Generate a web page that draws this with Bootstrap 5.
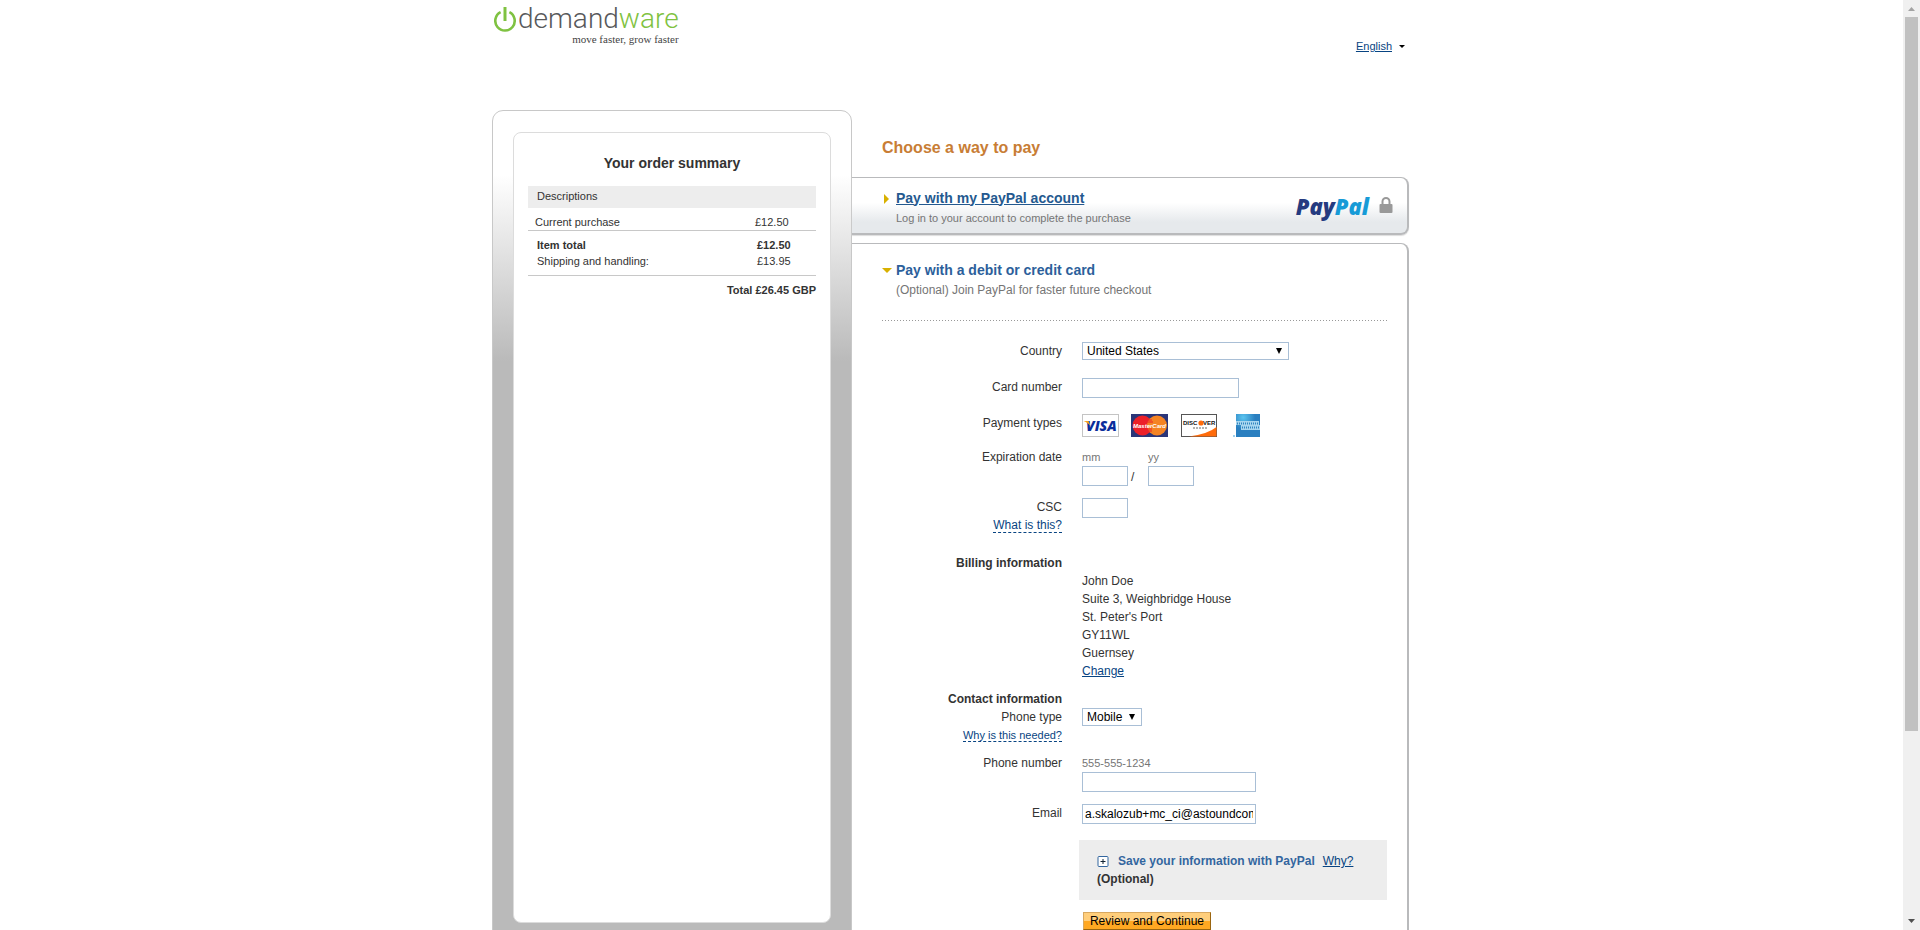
<!DOCTYPE html>
<html lang="en">
<head>
<meta charset="utf-8">
<meta name="viewport" content="width=device-width, initial-scale=1">
<title>Choose a way to pay</title>
<link href="https://cdn.jsdelivr.net/npm/bootstrap@5.3.0/dist/css/bootstrap.min.css" rel="stylesheet">
<script src="https://cdn.jsdelivr.net/npm/bootstrap@5.3.0/dist/js/bootstrap.bundle.min.js" defer></script>
<style>
  body { font: 12px/18px "Liberation Sans", Arial, sans-serif; color: #333; background: #fff; }
  a { color: #084482; }
  .checkout { max-width: 919px; padding-right: 2px; }
  .fine { font-size: 11px; }
  .hint { color: #757575; }

  /* header */
  .masthead { height: 110px; }
  .brand { padding: 5px 0 0 2px; }
  .brand-name { font: 300 28px/28px Roboto, sans-serif; color: #58595b; }
  .brand-name b { font-weight: 300; color: #7fc241; }
  .brand-tag { font: 11px/12px "Liberation Serif", serif; color: #444; }
  .lang { padding: 37px 4px 0 0; gap: 7px; }
  .lang-caret { border: 3px solid transparent; border-top-color: #000; border-bottom: 0; }

  /* order summary */
  .summary-frame { flex: 0 0 360px; padding: 21px 20px; border: 1px solid #c8c8c8; border-radius: 11px 11px 0 0; background: linear-gradient(#fff 64px, #bababa 250px); }
  .summary { border: 1px solid #dcdcdc; border-radius: 8px; padding: 20px 14px 0; background: #fff; }
  .summary h2 { font-size: 14px; line-height: 20px; margin: 0 0 13px; font-weight: 700; }
  .summary table { width: 100%; line-height: 16px; }
  .summary th, .summary td { padding: 0 0 0 9px; font-weight: inherit; }
  .summary td { width: 59px; padding: 0; }
  .summary .heading-row th { background: #ededed; line-height: 20px; padding-bottom: 2px; }
  .summary .lined { border-bottom: 1px solid #c8c8c8; }
  .summary .purchase th { padding: 6px 0 0 7px; }
  .summary .purchase td { padding-top: 6px; }
  .summary .purchase span { margin-left: -2px; }
  .summary .item-total > * { padding-top: 6px; }
  .summary .shipping > * { padding-bottom: 6px; }
  .summary .grand td { padding-top: 6px; }

  /* payment methods */
  .methods-title { font-size: 16px; line-height: 20px; color: #c87d35; font-weight: 700; margin: 28px 0 19px 30px; }
  .method { border: solid #b9babc; border-width: 1px 2px 2px 0; padding-left: 30px; }
  .method h2 { font-size: 14px; line-height: 18px; margin: 0 0 2px; font-weight: 700; color: #2c5f9b; }
  .method h2 a { color: #24598f; }
  .method-paypal { height: 58px; border-radius: 0 8px 8px 0; box-shadow: 0 1px 1px #ddd; background: linear-gradient(#fff 45%, #e6e9ec 80%); margin-bottom: 8px; padding-right: 14px; }
  .method-card { border-bottom: 0; border-radius: 0 8px 0 0; padding: 17px 20px 15px 30px; }
  .marker { flex: 0 0 14px; }
  .marker i { display: block; width: 0; border: 5px solid transparent; }
  .marker-right i { border-left-color: #d8b000; border-right: 0; margin: 4px 0 0 2px; }
  .marker-down i { border-top-color: #d8b000; border-bottom: 0; margin-top: 7px; }
  .pp-logo { font: italic 800 22px/24px "Open Sans", sans-serif; color: #253b80; margin-right: 10px; }
  .pp-logo b { font-weight: 800; color: #179bd7; }
  .divider { height: 1px; background: repeating-linear-gradient(90deg, #999 0 1px, #fff 1px 3px); margin: 21px 0; }

  /* form */
  .field { display: flex; gap: 20px; }
  .field-name { flex: 0 0 180px; text-align: right; }
  .gap-s { margin-top: 10px; }
  .gap-m { margin-top: 12px; }
  .gap-l { margin-top: 16px; }
  .gap-xl { margin-top: 18px; }
  .gap-group { margin-top: 20px; }
  .field input, .field select { display: block; border: 1px solid #a9bfd6; background-color: #fff; font: 12px/16px "Liberation Sans", Arial, sans-serif; color: #000; border-radius: 0; }
  .field input { height: 20px; padding: 1px 2px; }
  .field select { height: 18px; padding: 0 4px; appearance: none; background: url("data:image/svg+xml,%3Csvg xmlns='http://www.w3.org/2000/svg' width='6' height='6'%3E%3Cpath d='M0 0h6L3 6z'/%3E%3C/svg%3E") no-repeat right 6px center; }
  .w-country { width: 207px; }
  .w-card { width: 157px; }
  .w-short { width: 46px; }
  .w-type { width: 60px; }
  .w-long { width: 174px; }
  .slash { width: 20px; padding-left: 3px; }
  .tip { text-decoration: none; border-bottom: 1px dashed #084482; }
  .cards { height: 24px; }
  .save-box { background: #ededed; margin-left: 197px; padding: 12px 18px; color: #333; }
  .save-box .title { color: #33669f; }
  .btn-pay { margin-left: 201px; height: 18px; width: 128px; padding: 0; border: 1px solid; border-color: #d8a860 #9a6510 #9a6510 #d8a860; border-radius: 0; font: 12px/16px "Liberation Sans", Arial, sans-serif; color: #000; background: linear-gradient(#ffce7b 50%, #ffa822 50%); display: block; }

  /* window scrollbar */
  .scroll-track { flex: 0 0 17px; background: #f0f0f0; padding: 7px 2px 7px; }
  .scroll-thumb { width: 13px; height: 78%; background: #c1c1c1; }
</style>
</head>
<body>
<div class="d-flex vh-100 overflow-hidden">
  <div class="flex-fill">
    <div class="checkout mx-auto">
      <header class="masthead d-flex justify-content-between">
        <div class="brand">
          <div class="d-flex">
            <svg width="24" height="28" viewBox="0 0 24 28" fill="none" stroke="#7fc241" stroke-width="3" aria-hidden="true"><path d="M6.600 7.200a9.700 9.700 0 1 0 8.800 0" stroke-width="2.600"/><path d="M11 2v14"/></svg>
            <div>
              <div class="brand-name">demand<b>ware</b></div>
              <div class="brand-tag text-end">move faster, grow faster</div>
            </div>
          </div>
        </div>
        <div class="lang fine d-flex align-items-start">
          <a href="#">English</a><i class="lang-caret mt-2"></i>
        </div>
      </header>

      <div class="d-flex">
        <aside class="summary-frame d-flex">
          <section class="summary flex-fill fine">
            <h2 class="text-center">Your order summary</h2>
            <table>
              <tr class="heading-row"><th colspan="2">Descriptions</th></tr>
              <tr class="purchase lined"><th>Current purchase</th><td><span>£12.50</span></td></tr>
              <tr class="item-total fw-bold"><th>Item total</th><td>£12.50</td></tr>
              <tr class="shipping lined"><th>Shipping and handling:</th><td>£13.95</td></tr>
              <tr class="grand fw-bold"><td colspan="2" class="text-end">Total £26.45 GBP</td></tr>
            </table>
          </section>
        </aside>

        <main class="flex-fill">
          <h1 class="methods-title">Choose a way to pay</h1>

          <section class="method method-paypal d-flex align-items-center">
            <div class="marker marker-right align-self-start mt-2 pt-1"><i></i></div>
            <div class="flex-fill pt-1">
              <h2><a href="#">Pay with my PayPal account</a></h2>
              <div class="fine hint">Log in to your account to complete the purchase</div>
            </div>
            <div class="pp-logo">Pay<b>Pal</b></div>
            <svg width="14" height="17" viewBox="0 0 14 17" aria-hidden="true"><rect x="0.5" y="7" width="13" height="9" rx="1" fill="#999"/><path d="M3.5 8V4.5a3.5 3.5 0 0 1 7 0V8" fill="none" stroke="#999" stroke-width="2"/></svg>
          </section>

          <section class="method method-card">
            <div class="d-flex">
              <div class="marker marker-down"><i></i></div>
              <div>
                <h2>Pay with a debit or credit card</h2>
                <div class="hint">(Optional) Join PayPal for faster future checkout</div>
              </div>
            </div>
            <div class="divider"></div>

            <form>
              <div class="field">
                <label class="field-name" for="country">Country</label>
                <select id="country" class="w-country"><option>United States</option></select>
              </div>
              <div class="field gap-xl">
                <label class="field-name" for="card">Card number</label>
                <input id="card" class="w-card" type="text">
              </div>
              <div class="field gap-l">
                <div class="field-name">Payment types</div>
                <div class="cards">
                  <svg width="180" height="23" viewBox="0 0 180 23" role="img" aria-label="Accepted cards">
                    <rect x=".5" y=".5" width="36" height="22" fill="#fff" stroke="#c4c4c4"/>
                    <text x="4" y="17" font-family="Open Sans" font-size="14" font-weight="800" font-style="italic" fill="#0a2d9b">VISA</text>
                    <path d="M1.500 7h5l2 5C6.500 9.500 4 8 1.500 7z" fill="#f5a21b"/>
                    <rect x="49" width="37" height="23" fill="#2b3578"/>
                    <circle cx="60.500" cy="11.500" r="10" fill="#ec2028"/><circle cx="75" cy="11.500" r="10" fill="#f48323"/>
                    <path d="M65 6h5M65 8h6M65 15h5M66 17h4" stroke="#ec2028"/>
                    <text x="51" y="14" font-family="Liberation Sans" font-size="6" font-weight="700" font-style="italic" fill="#fff">MasterCard</text>
                    <rect x="99.500" y=".5" width="35" height="22" fill="#fff" stroke="#555"/>
                    <path d="M107 22.500Q126 20 134.500 13v9.500z" fill="#ff6b0a"/>
                    <text x="101" y="11" font-family="Liberation Sans" font-size="6" font-weight="700" fill="#111">DISC</text>
                    <circle cx="119" cy="9" r="2.600" fill="#ff6b0a"/>
                    <text x="121" y="11" font-family="Liberation Sans" font-size="6" font-weight="700" fill="#111">VER</text>
                    <path d="M111 14h14" stroke="#666" stroke-dasharray="2 1"/>
                    <defs><radialGradient id="amex" cx=".3" cy=".15"><stop stop-color="#5bc4ef"/><stop offset="1" stop-color="#2a7fc0"/></radialGradient></defs>
                    <rect x="154" width="24" height="23" fill="url(#amex)"/>
                    <path d="M154 7h23v4h1v5h-19v-5h-5z" fill="#a9d6ef"/>
                    <path d="M155 9.500h21M160 13.500h17" stroke="#3386c0" stroke-width="2" stroke-dasharray="1 1"/>
                    <rect x="151" y="21" width="2" height="2" fill="#9fd0ee"/>
                  </svg>
                </div>
              </div>
              <div class="field gap-s">
                <div class="field-name">Expiration date</div>
                <div class="d-flex align-items-end">
                  <div><label class="fine hint d-block" for="mm">mm</label><input id="mm" class="w-short" type="text"></div>
                  <div class="slash">/</div>
                  <div><label class="fine hint d-block" for="yy">yy</label><input id="yy" class="w-short" type="text"></div>
                </div>
              </div>
              <div class="field gap-m">
                <div class="field-name"><label class="d-block" for="csc">CSC</label><a class="tip" href="#">What is this?</a></div>
                <input id="csc" class="w-short" type="text">
              </div>

              <div class="field gap-group"><div class="field-name fw-bold">Billing information</div></div>
              <div class="field">
                <div class="field-name"></div>
                <address class="mb-0">John Doe<br>Suite 3, Weighbridge House<br>St. Peter's Port<br>GY11WL<br>Guernsey<br><a href="#">Change</a></address>
              </div>

              <div class="field gap-s"><div class="field-name fw-bold">Contact information</div></div>
              <div class="field">
                <div class="field-name"><label class="d-block" for="ptype">Phone type</label><a class="tip fine" href="#">Why is this needed?</a></div>
                <select id="ptype" class="w-type"><option>Mobile</option></select>
              </div>
              <div class="field gap-s">
                <label class="field-name" for="phone">Phone number</label>
                <div><div class="fine hint">555-555-1234</div><input id="phone" class="w-long" type="text"></div>
              </div>
              <div class="field gap-m">
                <label class="field-name" for="email">Email</label>
                <input id="email" class="w-long" type="text" value="a.skalozub+mc_ci@astoundcommerce.com">
              </div>

              <div class="save-box gap-l">
                <div class="d-flex align-items-center fw-bold">
                  <svg class="me-2" width="13" height="13" viewBox="0 0 13 13" aria-hidden="true"><rect x="1" y="1.500" width="10" height="10" rx="1" fill="#fff" stroke="#33669f"/><path d="M3.500 6.500h5M6 4v5" stroke="#123"/></svg>
                  <span class="title">Save your information with PayPal</span>
                  <a class="fw-normal ms-2" href="#">Why?</a>
                </div>
                <div class="fw-bold">(Optional)</div>
              </div>
              <button class="btn-pay gap-m" type="button">Review and Continue</button>
            </form>
          </section>
        </main>
      </div>
    </div>
  </div>
  <div class="scroll-track d-flex flex-column align-items-center" aria-hidden="true">
    <svg width="7" height="10" viewBox="0 0 7 10" class="flex-shrink-0"><path d="M0 4h7L3.500 0z" fill="#a3a3a3"/></svg>
    <div class="scroll-thumb"></div>
    <svg width="7" height="4" viewBox="0 0 7 4" class="mt-auto flex-shrink-0"><path d="M0 0h7L3.500 4z" fill="#505050"/></svg>
  </div>
</div>
</body>
</html>
